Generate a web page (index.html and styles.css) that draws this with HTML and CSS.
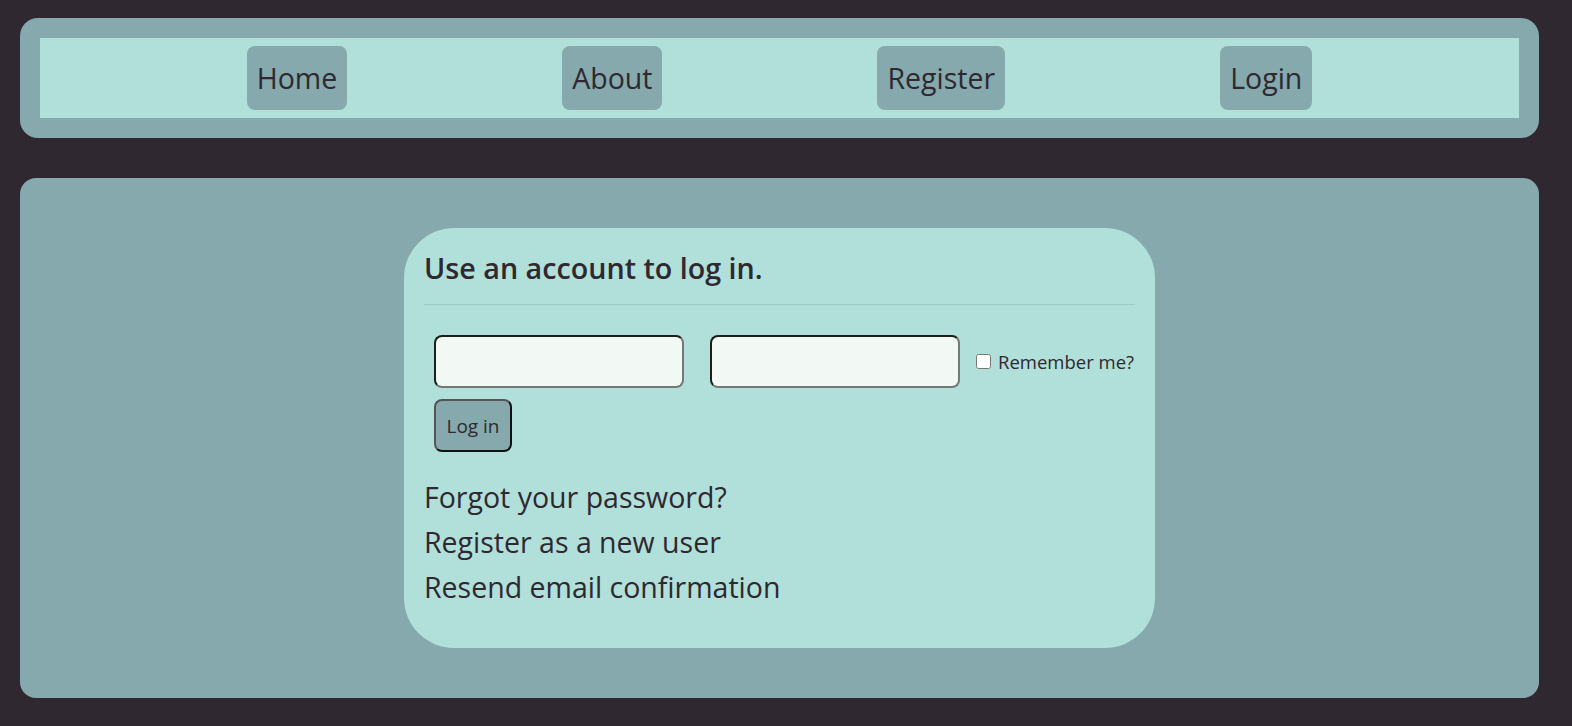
FILE: index.html
```html
<!DOCTYPE html>
<html lang="en">
<head>
<meta charset="utf-8">
<title>Log in</title>
<link rel="stylesheet" href="styles.css">
</head>
<body>
<header class="nav-wrap">
  <nav class="nav-inner">
    <a class="nav-btn" href="#">Home</a>
    <a class="nav-btn" href="#">About</a>
    <a class="nav-btn" href="#">Register</a>
    <a class="nav-btn" href="#">Login</a>
  </nav>
</header>
<main class="main">
  <section class="card">
    <h4 class="card-title">Use an account to log in.</h4>
    <hr class="divider">
    <form class="login-form">
      <div class="form-row">
        <input class="field" type="email" aria-label="Email">
        <input class="field field-second" type="password" aria-label="Password">
        <label class="remember"><input class="check" type="checkbox"> Remember me?</label>
      </div>
      <button class="submit" type="button">Log in</button>
    </form>
    <div class="links">
      <a class="link" href="#">Forgot your password?</a>
      <a class="link" href="#">Register as a new user</a>
      <a class="link" href="#">Resend email confirmation</a>
    </div>
  </section>
</main>
</body>
</html>
```
FILE: styles.css
```css
* { box-sizing: border-box; }
html, body { margin: 0; }
body {
  background: #2f2830;
  color: #2f2830;
  font-family: "Open Sans", "Noto Sans", sans-serif;
  padding: 18px 33px 28px 20px;
}
.nav-wrap {
  background: #85a9ad;
  border-radius: 18px;
  padding: 20px;
}
.nav-inner {
  background: #b1dfd9;
  height: 80px;
  display: flex;
  justify-content: center;
  align-items: center;
  gap: 215px;
}
.nav-btn {
  background: #85a9ad;
  border-radius: 8px;
  height: 64px;
  padding: 0 10px;
  display: flex;
  align-items: center;
  font-size: 28.5px;
  color: #2f2830;
  text-decoration: none;
}
.main {
  margin-top: 40px;
  background: #85a9ad;
  border-radius: 16px;
  padding: 50px 0;
}
.card {
  width: 751px;
  height: 420px;
  margin: 0 auto;
  background: #b1dfd9;
  border-radius: 50px;
  padding: 20px 20px 0 20px;
}
.card-title {
  margin: 0;
  font-size: 28.7px;
  line-height: 40px;
  font-weight: 600;
}
.divider {
  margin: 16px 0 0 0;
  border: 0;
  border-top: 1px solid #9ccac4;
  height: 0;
}
.login-form {
  margin-top: 30px;
  padding-left: 10px;
}
.form-row {
  display: flex;
  align-items: center;
}
.field {
  flex-shrink: 0;
  width: 250px;
  height: 53px;
  background: #f2f8f4;
  border: 2px solid;
  border-color: #1d1d1d #777 #777 #1d1d1d;
  border-radius: 8px;
  margin: 0;
}
.field-second { margin-left: 26px; }
.remember {
  display: flex;
  align-items: center;
  flex-shrink: 0;
  white-space: nowrap;
  margin-left: 16px;
  font-size: 18.5px;
}
.check {
  width: 15px;
  height: 15px;
  margin: 0 7px 0 0;
}
.submit {
  margin-top: 11px;
  width: 78px;
  height: 53px;
  background: #85a9ad;
  border: 2px solid;
  border-color: #555 #111 #111 #555;
  border-radius: 8px;
  font-family: inherit;
  font-size: 19px;
  color: #2f2830;
  padding: 0;
}
.links {
  margin-top: 23px;
  display: flex;
  flex-direction: column;
}
.link {
  font-size: 28.5px;
  line-height: 45px;
  color: #2f2830;
  text-decoration: none;
}
```
